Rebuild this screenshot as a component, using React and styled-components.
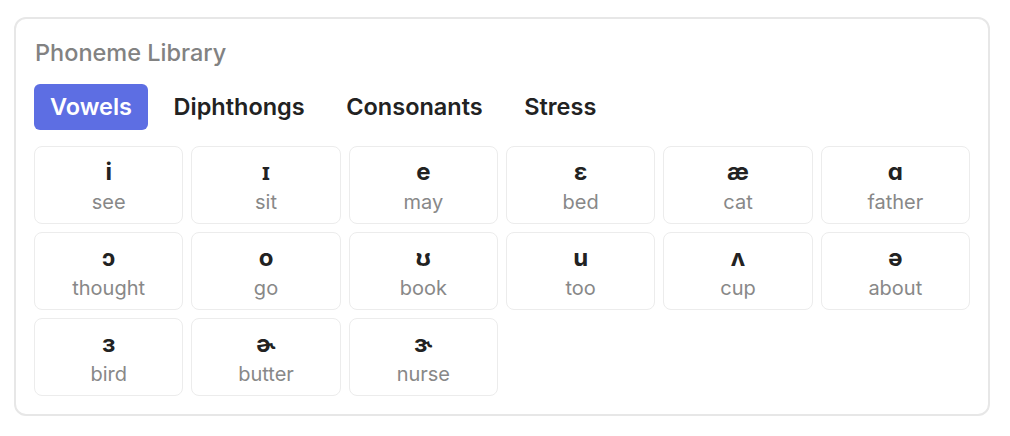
import React, { useState } from 'react'
import styled, { createGlobalStyle } from 'styled-components'

const GlobalStyle = createGlobalStyle`
    body{
        margin: 0;
        background: #fff;
        font-family: Inter, "Noto Sans", "DejaVu Sans", sans-serif;
    }
`

const phonemes = [
    { symbol: 'i', word: 'see' },
    { symbol: 'ɪ', word: 'sit' },
    { symbol: 'e', word: 'may' },
    { symbol: 'ɛ', word: 'bed' },
    { symbol: 'æ', word: 'cat' },
    { symbol: 'ɑ', word: 'father' },
    { symbol: 'ɔ', word: 'thought' },
    { symbol: 'o', word: 'go' },
    { symbol: 'ʊ', word: 'book' },
    { symbol: 'u', word: 'too' },
    { symbol: 'ʌ', word: 'cup' },
    { symbol: 'ə', word: 'about' },
    { symbol: 'ɜ', word: 'bird' },
    { symbol: 'ɚ', word: 'butter' },
    { symbol: 'ɝ', word: 'nurse' },
]

const tabs = ['Vowels', 'Diphthongs', 'Consonants', 'Stress']

const App = () => {
    const [active, setActive] = useState('Vowels')

    return (
        <Page>
            <GlobalStyle />
            <Card>
                <Title>Phoneme Library</Title>
                <Tabs>
                    {tabs.map((tab) => (
                        <Tab key={tab} $active={tab === active} onClick={() => setActive(tab)}>
                            {tab}
                        </Tab>
                    ))}
                </Tabs>
                <Grid>
                    {phonemes.map(({ symbol, word }) => (
                        <Cell key={word}>
                            <Symbol>{symbol}</Symbol>
                            <Word>{word}</Word>
                        </Cell>
                    ))}
                </Grid>
            </Card>
        </Page>
    )
}

const Page = styled.div`
    padding: 17px 20px 0 14px;
`

const Card = styled.section`
    border: 2px solid #e7e7e7;
    border-radius: 12px;
    padding: 20px 18px 18px 18px;
`

const Title = styled.h2`
    margin: 0 0 17px 1px;
    font-size: 23.5px;
    line-height: 28px;
    font-weight: 500;
    color: #828282;
`

const Tabs = styled.div`
    display: flex;
    gap: 9.5px;
    margin-bottom: 16px;
`

const Tab = styled.button`
    font-family: inherit;
    font-size: 23.5px;
    line-height: 26px;
    font-weight: 600;
    padding: 10px 16px;
    border: none;
    border-radius: 6px;
    cursor: pointer;
    background: ${({ $active }) => ($active ? '#5d6ee3' : 'transparent')};
    color: ${({ $active }) => ($active ? '#fff' : '#222')};
`

const Grid = styled.div`
    display: grid;
    grid-template-columns: repeat(6, 1fr);
    grid-auto-rows: 78px;
    gap: 8px;
`

const Cell = styled.div`
    display: flex;
    flex-direction: column;
    align-items: center;
    justify-content: center;
    gap: 4px;
    border: 1.5px solid #ececec;
    border-radius: 8px;
    padding-top: 1px;
`

const Symbol = styled.span`
    font-size: 24px;
    line-height: 28px;
    font-weight: 700;
    color: #222;
`

const Word = styled.span`
    font-size: 20px;
    line-height: 24px;
    color: #888;
`

export default App
